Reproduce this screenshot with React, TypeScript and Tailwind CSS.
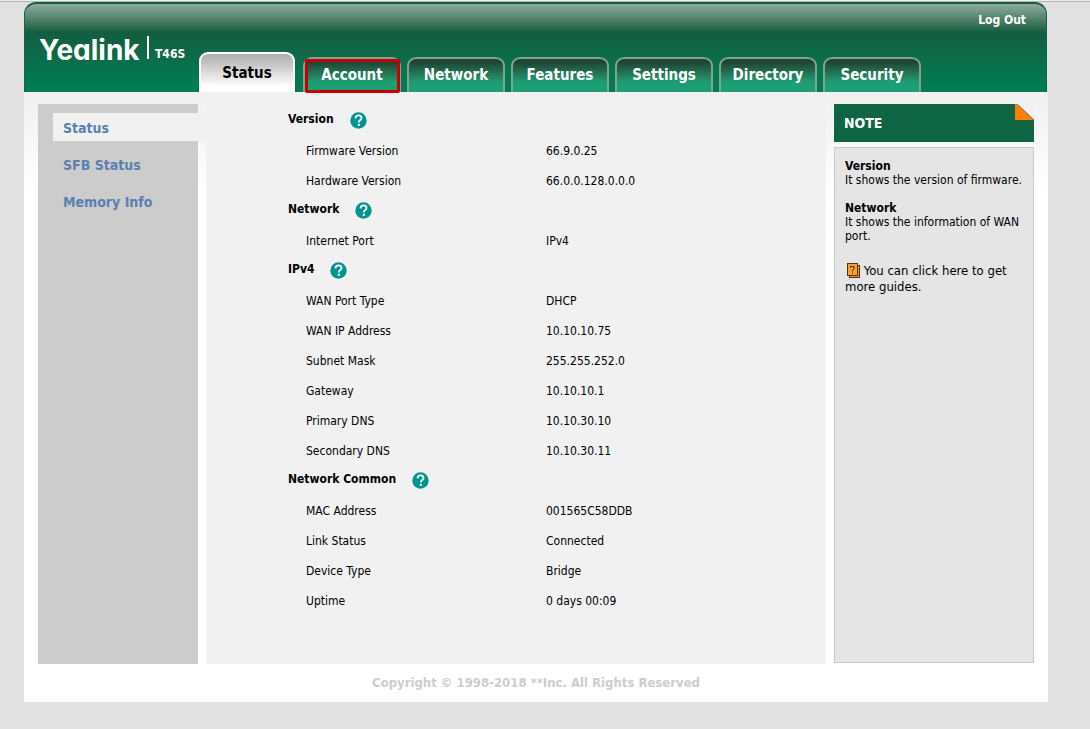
const tabs = ['Status', 'Account', 'Network', 'Features', 'Settings', 'Directory', 'Security']

const menu = ['Status', 'SFB Status', 'Memory Info']

const sections = [
  {
    title: 'Version',
    rows: [
      ['Firmware Version', '66.9.0.25'],
      ['Hardware Version', '66.0.0.128.0.0.0'],
    ],
  },
  {
    title: 'Network',
    rows: [['Internet Port', 'IPv4']],
  },
  {
    title: 'IPv4',
    rows: [
      ['WAN Port Type', 'DHCP'],
      ['WAN IP Address', '10.10.10.75'],
      ['Subnet Mask', '255.255.252.0'],
      ['Gateway', '10.10.10.1'],
      ['Primary DNS', '10.10.30.10'],
      ['Secondary DNS', '10.10.30.11'],
    ],
  },
  {
    title: 'Network Common',
    rows: [
      ['MAC Address', '001565C58DDB'],
      ['Link Status', 'Connected'],
      ['Device Type', 'Bridge'],
      ['Uptime', '0 days 00:09'],
    ],
  },
]

function HelpIcon() {
  return (
    <svg width="17" height="17" viewBox="0 0 17 17" aria-hidden="true">
      <circle cx="8.5" cy="8.5" r="8.2" fill="#009490" />
      <path
        d="M5.5 6.4C5.6 4.4 6.8 3.4 8.5 3.4c1.8 0 3 1 3 2.6 0 1.1-.6 1.7-1.5 2.3-.9.6-1.2 1-1.2 2.2"
        fill="none"
        stroke="#fff"
        strokeWidth="1.8"
      />
      <rect x="7.8" y="11.8" width="2" height="2" fill="#fff" />
    </svg>
  )
}

function GuideIcon() {
  return (
    <svg className="ml-0.5 inline-block align-text-bottom" width="13" height="15" viewBox="0 0 13 15" aria-hidden="true">
      <rect x="2.5" y="2.5" width="10" height="12" fill="#f7931e" stroke="#4a3418" />
      <rect x="0.5" y="0.5" width="10" height="12" fill="#ff9f2e" stroke="#4a3418" />
      <path d="M3.5 5V3.5h3.5v2.5L5.5 7.2V8.5M5.5 9.5v1.2" fill="none" stroke="#4a3418" />
    </svg>
  )
}

// Top bar with the logo and the main tabs
function Header() {
  return (
    <header className="mr-px flex h-[90px] items-end rounded-t-xl border-x border-t-2 border-[#175c40] border-x-[#0b6a49] bg-linear-to-b from-[#8fad9f] from-0% via-[#125d40] via-32% to-[#007b52] to-90%">
      <div className="flex h-full w-[174px] shrink-0 items-start pt-8 pl-3.5 text-white">
        {/* cv11 is Inter's single-storey a */}
        <span className="w-[102px] font-['Inter',sans-serif] text-[28px] leading-7 font-bold [font-feature-settings:'cv11']">
          Yealink
        </span>
        <span className="ml-1.5 h-[23px] w-0.5 bg-white" />
        <span className="mt-2 ml-1.5 text-xs leading-5 font-bold">T46S</span>
      </div>
      <nav className="flex grow items-end gap-1.5">
        {tabs.map((tab) =>
          tab === 'Status' ? (
            <a
              key={tab}
              href="#status"
              className="mr-0.5 flex h-10 w-24 items-center justify-center rounded-t-[9px] border-2 border-b-0 border-white bg-linear-to-b from-[#adadad] to-white to-85% text-[15px] font-bold text-black"
            >
              {tab}
            </a>
          ) : (
            <a
              key={tab}
              href={`#${tab.toLowerCase()}`}
              className="relative flex h-[35px] w-[98px] items-center justify-center rounded-t-[9px] border-2 border-b-0 border-[#7fa592] bg-linear-to-b from-[#1f4534] from-10% to-[#1e9e74] to-70% text-[15px] font-bold text-white"
            >
              {tab}
              {tab === 'Account' && (
                <span className="absolute top-0 -right-px -bottom-px left-0 rounded-xs border-3 border-[#c90000]" />
              )}
            </a>
          ),
        )}
      </nav>
      <a href="#logout" className="mr-5 self-start pt-1.5 text-xs leading-5 font-bold text-white">
        Log Out
      </a>
    </header>
  )
}

function Sidebar() {
  return (
    <aside className="w-40 shrink-0 bg-[#ccc] pt-[9px] pl-[15px]">
      <ul className="flex flex-col gap-[9px] text-sm font-bold text-[#5b80b0]">
        {menu.map((item) => (
          <li key={item} className={item === 'Status' ? '-mr-2 bg-[#f1f1f1]' : ''}>
            <a href="#status" className="block px-2.5 pt-0.5 leading-[26px]">
              {item}
            </a>
          </li>
        ))}
      </ul>
    </aside>
  )
}

function StatusTable() {
  return (
    <main className="min-w-0 grow bg-[#f1f1f1]">
      <table className="w-full table-fixed text-left text-xs text-black">
        <colgroup>
          <col className="w-[340px]" />
          <col />
        </colgroup>
        {sections.map(({ title, rows }) => (
          <tbody key={title}>
            <tr className="h-[30px]">
              <th colSpan={2} className="p-0 pl-[82px]">
                <div className="flex items-center gap-4">
                  {title}
                  <button type="button" aria-label={`${title} help`} className="mt-0.5">
                    <HelpIcon />
                  </button>
                </div>
              </th>
            </tr>
            {rows.map(([label, value]) => (
              <tr key={label} className="h-[30px]">
                <th className="p-0 pt-1 pl-[100px] font-normal">{label}</th>
                <td className="p-0 pt-1">{value}</td>
              </tr>
            ))}
          </tbody>
        ))}
      </table>
    </main>
  )
}

function Note() {
  return (
    <aside className="flex w-[200px] shrink-0 flex-col gap-[5px]">
      <div className="relative bg-[#0e6544] px-2.5 text-sm leading-[38px] font-bold text-white">
        NOTE
        <svg className="absolute top-0 right-0" width="19" height="16" viewBox="0 0 19 16" aria-hidden="true">
          <path d="M2 0h17v16z" fill="#f1f1f1" />
          <path d="M0 0h2l17 16H0z" fill="#ff7f00" />
          <path d="M2 0l17 16" stroke="#6b7a76" />
        </svg>
      </div>
      <div className="mb-px grow border border-[#c8c8c8] bg-[#e5e5e5] px-2.5 pt-[11px] text-xs leading-[14px] text-black">
        <h3 className="font-bold">Version</h3>
        <p>It shows the version of firmware.</p>
        <h3 className="mt-3.5 font-bold">Network</h3>
        <p>It shows the information of WAN port.</p>
        <a href="#guides" className="mt-5 block text-[13px] leading-4">
          <GuideIcon /> You can click here to get more guides.
        </a>
      </div>
    </aside>
  )
}

export default function App() {
  return (
    <div className="min-h-screen border-t border-[#efefef] bg-[#e1e1e1] font-['DejaVu_Sans_Condensed','Noto_Sans',sans-serif]">
      <div className="border-t border-[#b4b4b4]">
        <div className="mr-[42px] ml-6">
          <Header />
          <div className="bg-white bg-linear-to-b from-[#f0f0f0] to-white to-[100px] px-3.5 pt-3">
            <div className="flex min-h-[560px] gap-2">
              <Sidebar />
              <StatusTable />
              <Note />
            </div>
            <footer className="text-center text-[13px] leading-[38px] font-bold text-[#ccc]">
              Copyright © 1998-2018 **Inc. All Rights Reserved
            </footer>
          </div>
        </div>
      </div>
    </div>
  )
}
